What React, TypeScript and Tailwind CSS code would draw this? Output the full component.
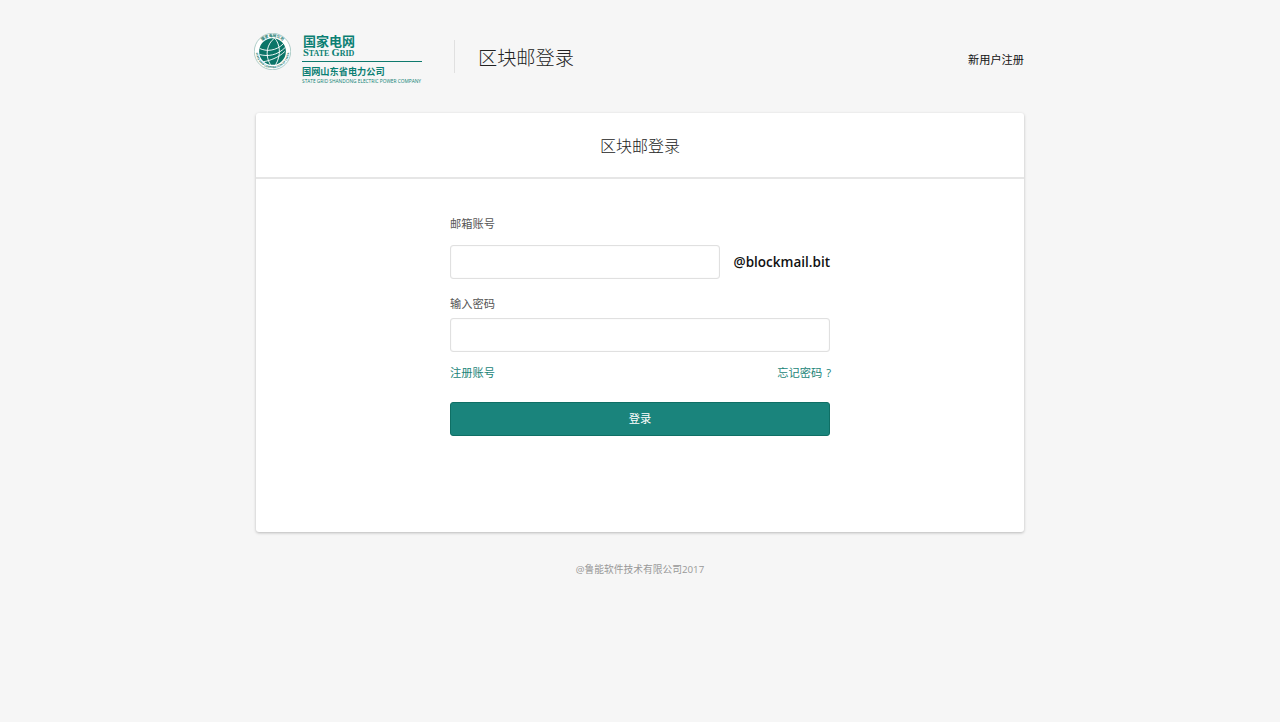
const font = "font-['Open_Sans','Noto_Sans_CJK_SC',sans-serif]";

const Logo = () => (
  <div className="-ml-[2px] flex w-[169px] items-start gap-[11px]">
    <svg viewBox="0 0 36 36" className="mt-[5px] h-[37px] w-[37px] shrink-0">
      <defs>
        <path id="ringTop" d="M3.800 18a14.200 14.200 0 0 1 28.400 0" />
        <path id="ringBottom" d="M1.800 18a16.200 16.200 0 0 0 32.400 0" />
      </defs>
      <circle cx="18" cy="18" r="17.7" fill="#ffffff" stroke="#7fb0a9" strokeWidth="0.6" />
      <text fontSize="3.600" fontWeight="700" fill="#0b6f65" textAnchor="middle">
        <textPath href="#ringTop" startOffset="50%">国家电网公司</textPath>
      </text>
      <text fontSize="2.600" fontWeight="700" fill="#0b6f65" textAnchor="middle">
        <textPath href="#ringBottom" startOffset="50%">STATE GRID CORPORATION OF CHINA</textPath>
      </text>
      <circle cx="18" cy="18" r="13" fill="#0b7568" />
      <path d="M5.500 15c6 3 16 3 23.500-5M5.500 21c8 2 17 1 25-7M9 28c6-1 15-4 21-10" fill="none" stroke="#ffffff" strokeWidth="0.9" />
      <path d="M20 5c-7 5-10 16-4 26M20 5c5 5 7 16 1 26" fill="none" stroke="#ffffff" strokeWidth="0.9" />
    </svg>
    <div className="flex w-[120px] flex-col pt-[6px]">
      <div className="pl-[1px] text-[13px] leading-[14px] font-bold text-[#0b7f73]">国家电网</div>
      <div className="pl-[1px] font-['Liberation_Serif',serif] text-[8px] leading-[10px] font-bold text-[#0b7f73]">
        <span className="text-[10.500px]">S</span>TATE <span className="text-[10.500px]">G</span>RID
      </div>
      <div className="mt-[2px] h-px w-[120px] bg-[#0f7a6e]" />
      <div className="mt-[4px] text-[9.200px] leading-[11px] font-bold text-[#0b7f73]">国网山东省电力公司</div>
      <div className="mt-px text-[4.800px] leading-[7px] whitespace-nowrap text-[#0b7f73]">STATE GRID SHANDONG ELECTRIC POWER COMPANY</div>
    </div>
  </div>
);

const Field = ({ className }: { className: string }) => (
  <input
    type="text"
    className={`h-[34px] rounded-[3px] border border-[#e0e0e0] bg-white shadow-[inset_0_0_1px_rgba(0,0,0,0.15)] outline-none ${className}`}
  />
);

export default function App() {
  return (
    <div className={`min-h-[722px] bg-[#f6f6f6] ${font}`}>
      <div className="mx-auto w-[768px]">
        <header className="flex h-[113px] items-start justify-between pt-[28px]">
          <div className="flex items-center">
            <Logo />
            <div className="ml-[31px] flex h-[33px] items-center border-l border-[#e0e0e0] pt-[3px] pl-[23px] text-[19.200px] font-light text-[#222222]">
              区块邮登录
            </div>
          </div>
          <a className="mt-[23px] text-[11.200px] leading-[18px] text-[#111111]">新用户注册</a>
        </header>

        <main className="h-[419px] rounded-[3px] bg-white shadow-[0_1px_3px_rgba(0,0,0,0.25)]">
          <div className="flex h-[66px] items-center justify-center border-b-2 border-[#e6e6e6] pt-[1px] text-[16px] font-light text-[#222222]">
            区块邮登录
          </div>
          <form className="mx-auto flex w-[380px] flex-col pt-[36px]">
            <label className="text-[11.250px] leading-[18px] text-[#555555]">邮箱账号</label>
            <div className="mt-[12px] flex items-center justify-between">
              <Field className="w-[270px]" />
              <span className="text-[13.500px] leading-[20px] font-semibold text-[#111111]">@blockmail.bit</span>
            </div>
            <label className="mt-[16px] text-[11.250px] leading-[18px] text-[#555555]">输入密码</label>
            <Field className="mt-[5px] w-full" />
            <div className="mt-[12px] flex justify-between text-[11.250px] leading-[18px] text-[#1a8478]">
              <a>注册账号</a>
              <a className="-mr-[1px] [word-spacing:1px]">忘记密码 ?</a>
            </div>
            <button
              type="button"
              className="mt-[20px] h-[34px] rounded-[3px] border border-[#0f6f65] bg-[#1a847c] text-[11.250px] text-white"
            >
              登录
            </button>
          </form>
        </main>

        <footer className="mt-[29px] text-center text-[9.750px] leading-[18px] text-[#999999]">
          @鲁能软件技术有限公司2017
        </footer>
      </div>
    </div>
  );
}
